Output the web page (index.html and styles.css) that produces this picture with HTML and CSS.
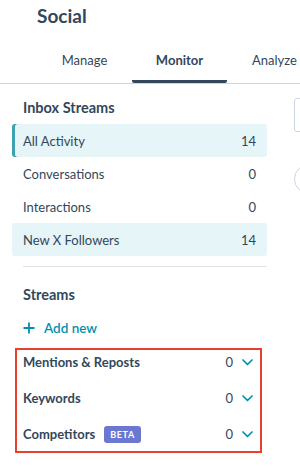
FILE: index.html
```html
<!DOCTYPE html>
<html>
<head>
<meta charset="utf-8">
<link rel="stylesheet" href="styles.css">
</head>
<body>
<header class="header">
  <h1 class="title">Social</h1>
  <nav class="tabs">
    <div class="tab">Manage</div>
    <div class="tab tab-active">Monitor</div>
    <div class="tab">Analyze</div>
  </nav>
</header>
<div class="layout">
  <aside class="sidebar">
    <h2 class="section-title">Inbox Streams</h2>
    <ul class="stream-list">
      <li class="stream stream-selected"><span>All Activity</span><span>14</span></li>
      <li class="stream"><span>Conversations</span><span>0</span></li>
      <li class="stream"><span>Interactions</span><span>0</span></li>
      <li class="stream stream-tinted"><span>New X Followers</span><span>14</span></li>
    </ul>
    <hr class="divider">
    <h2 class="section-title section-streams">Streams</h2>
    <div class="add-new">
      <svg class="plus" width="12" height="12" viewBox="0 0 12 12"><path d="M6 0.5V11.5M0.5 6H11.5" stroke="#0091ae" stroke-width="1.8" fill="none"/></svg>
      <span>Add new</span>
    </div>
    <div class="highlight">
      <div class="group"><span class="group-name">Mentions &amp; Reposts</span><span class="group-right"><span class="count">0</span><svg class="chev" width="11" height="7" viewBox="0 0 11 7"><path d="M1 1L5.5 5.5L10 1" stroke="#0091ae" stroke-width="1.7" fill="none" stroke-linecap="round" stroke-linejoin="round"/></svg></span></div>
      <div class="group"><span class="group-name">Keywords</span><span class="group-right"><span class="count">0</span><svg class="chev" width="11" height="7" viewBox="0 0 11 7"><path d="M1 1L5.5 5.5L10 1" stroke="#0091ae" stroke-width="1.7" fill="none" stroke-linecap="round" stroke-linejoin="round"/></svg></span></div>
      <div class="group"><span class="group-name">Competitors <span class="beta">BETA</span></span><span class="group-right"><span class="count">0</span><svg class="chev" width="11" height="7" viewBox="0 0 11 7"><path d="M1 1L5.5 5.5L10 1" stroke="#0091ae" stroke-width="1.7" fill="none" stroke-linecap="round" stroke-linejoin="round"/></svg></span></div>
    </div>
  </aside>
  <main class="main">
    <div class="search-box"></div>
    <div class="round-btn"></div>
  </main>
</div>
</body>
</html>
```

FILE: styles.css
```css
* { box-sizing: border-box; }
html, body { margin: 0; padding: 0; }
body {
  width: 300px;
  height: 472px;
  overflow: hidden;
  background: #ffffff;
  color: #33475b;
  font-family: Lato, "Liberation Sans", sans-serif;
}
.header {
  border-bottom: 1px solid #cbd6e2;
}
.title {
  margin: 0;
  padding: 4px 0 0 37px;
  font-size: 19px;
  line-height: 24px;
  font-weight: 700;
}
.tabs {
  display: flex;
  padding-left: 37px;
  margin-top: 23px;
  overflow: hidden;
}
.tab {
  flex: 0 0 95px;
  text-align: center;
  font-size: 13px;
  line-height: 18px;
  padding-bottom: 11px;
  border-bottom: 3px solid transparent;
  white-space: nowrap;
}
.tab-active {
  font-weight: 700;
  border-bottom-color: #33475b;
  border-radius: 2px;
}
.layout {
  display: flex;
  gap: 27px;
  overflow: hidden;
}
.sidebar {
  flex: 0 0 255px;
  margin-left: 12px;
}
.section-title {
  margin: 0;
  padding-left: 11px;
  font-size: 14.5px;
  line-height: 20px;
  font-weight: 700;
}
.sidebar > .section-title:first-child { margin-top: 14px; }
.stream-list {
  list-style: none;
  margin: 6px 0 0;
  padding: 0;
}
.stream {
  display: flex;
  justify-content: space-between;
  align-items: center;
  height: 33px;
  padding: 0 11px;
  font-size: 13px;
  border-radius: 3px;
}
.stream-selected {
  background: #e5f5f8;
  box-shadow: inset 3px 0 0 #3f9fb3;
}
.stream-tinted { background: #e5f5f8; }
.divider {
  border: 0;
  border-top: 1.5px solid #dfe3eb;
  margin: 10px 0 0 11px;
}
.section-streams { margin-top: 18px; }
.add-new {
  display: flex;
  align-items: center;
  gap: 9px;
  margin: 13px 0 0 11px;
  color: #0091ae;
  font-size: 13.5px;
  font-weight: 600;
  height: 20px;
}
.highlight {
  margin: 10px 5px 0 3px;
  border: 2px solid #e8412b;
  padding: 0 7px 5px 6px;
  display: flex;
  flex-direction: column;
  gap: 12px;
}
.group {
  display: flex;
  justify-content: space-between;
  align-items: center;
  height: 24px;
  font-size: 13px;
  font-weight: 700;
}
.group-name { display: flex; align-items: center; gap: 9px; }
.beta {
  display: inline-block;
  background: #6a78d1;
  color: #ffffff;
  font-size: 9px;
  font-weight: 700;
  letter-spacing: 0.6px;
  line-height: 17px;
  height: 17px;
  padding: 0 6px;
  border-radius: 3px;
}
.group-right { display: flex; align-items: center; gap: 9px; font-weight: 400; }
.count { font-size: 13px; }
.main {
  flex: 1;
  padding-top: 14px;
}
.search-box {
  width: 40px;
  height: 34px;
  border: 1px solid #cbd6e2;
  border-radius: 3px;
}
.round-btn {
  margin-top: 32px;
  width: 30px;
  height: 30px;
  border: 1.5px solid #cbd6e2;
  border-radius: 50%;
}
```
